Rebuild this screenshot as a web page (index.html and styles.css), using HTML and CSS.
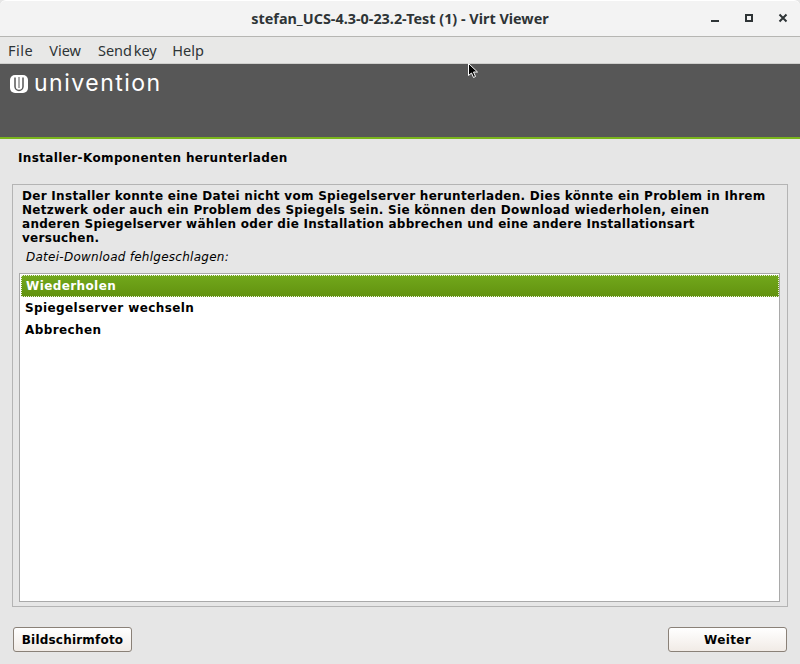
FILE: index.html
```html
<!DOCTYPE html>
<html lang="de">
<head>
<meta charset="utf-8">
<title>stefan_UCS-4.3-0-23.2-Test (1) - Virt Viewer</title>
<link rel="stylesheet" href="styles.css">
</head>
<body>
<div class="window">
  <header class="titlebar">
    <div class="title">stefan_UCS-4.3-0-23.2-Test (1) - Virt Viewer</div>
    <div class="controls">
      <svg class="ctl" width="16" height="16" viewBox="0 0 16 16"><rect x="3" y="10" width="8" height="2" fill="#2e3436"/></svg>
      <svg class="ctl" width="16" height="16" viewBox="0 0 16 16"><rect x="4" y="5" width="6" height="6" fill="none" stroke="#2e3436" stroke-width="2"/></svg>
      <svg class="ctl" width="16" height="16" viewBox="0 0 16 16"><path d="M3.500 4.500l7 7M10.500 4.500l-7 7" fill="none" stroke="#2e3436" stroke-width="2"/></svg>
    </div>
  </header>
  <nav class="menubar">
    <span class="menu-item menu-file">File</span>
    <span class="menu-item">View</span>
    <span class="menu-item menu-send">Send key</span>
    <span class="menu-item">Help</span>
  </nav>
  <div class="banner">
    <div class="logo">
      <svg width="19" height="19" viewBox="0 0 19 19"><rect x="0" y="0" width="18" height="18" rx="5" fill="#fff"/><path d="M5 2.500v9a4 4 0 0 0 8 0v-9" fill="none" stroke="#575757" stroke-width="1.500"/><path d="M9 2v11" stroke="#575757" stroke-width="1"/></svg>
      <span class="logo-text">univention</span>
    </div>
    <svg class="cursor" width="12" height="18" viewBox="0 0 12 18"><path d="M1.500 1.500v12l3-2.500 2 4.500 2-1-2-4.500h4z" fill="#000" stroke="#fff" stroke-width="1"/></svg>
  </div>
  <main class="installer">
    <h1 class="heading">Installer-Komponenten herunterladen</h1>
    <section class="frame">
      <p class="message">Der Installer konnte eine Datei nicht vom Spiegelserver herunterladen. Dies könnte ein Problem in Ihrem Netzwerk oder auch ein Problem des Spiegels sein. Sie können den Download wiederholen, einen anderen Spiegelserver wählen oder die Installation abbrechen und eine andere Installationsart versuchen.</p>
      <p class="question">Datei-Download fehlgeschlagen:</p>
      <ul class="list">
        <li class="row selected">Wiederholen</li>
        <li class="row">Spiegelserver wechseln</li>
        <li class="row">Abbrechen</li>
      </ul>
    </section>
    <footer class="actions">
      <button class="btn btn-shot">Bildschirmfoto</button>
      <button class="btn btn-next">Weiter</button>
    </footer>
  </main>
</div>
</body>
</html>
```
FILE: styles.css
```css
* { box-sizing: border-box; }
html, body { margin: 0; padding: 0; }
body { width: 800px; height: 664px; overflow: hidden; background: #e6e6e6; }
.window { width: 800px; height: 664px; display: flex; flex-direction: column; position: relative; }
.titlebar { height: 37px; flex: none; background: #f3f3f3; border-bottom: 1px solid #b6b6b3; border-top: 1px solid #fff; border-radius: 6px 6px 0 0; display: flex; align-items: center; justify-content: center; position: relative; }
.title { font: 700 14.400px "Noto Sans", sans-serif; color: #2e3436; }
.controls { position: absolute; right: 9px; top: 9px; display: flex; gap: 18px; margin-right: -1px; }
.ctl { display: block; }
.menubar { height: 27px; flex: none; background: #e8e8e7; border-bottom: 1px solid #cfcfcd; display: flex; align-items: center; padding-left: 8px; gap: 16px; font: 14.500px "Noto Sans", sans-serif; color: #2e3436; }
.menu-file { letter-spacing: 0.500px; }
.menu-send { word-spacing: -2px; margin-left: 1px; margin-right: -0.500px; }
.banner { height: 75px; flex: none; background: #575757; border-bottom: 2px solid #7ab51d; position: relative; padding: 11px 0 0 10px; }
.logo { display: flex; align-items: center; gap: 5px; height: 19px; }
.logo svg { display: block; }
.logo-text { font: 400 23px "Inter", sans-serif; color: #fff; letter-spacing: 1.500px; margin-bottom: 4px; }
.cursor { position: absolute; left: 467px; top: -2px; }
.installer { flex: 1; display: flex; flex-direction: column; padding: 0 12px; font-family: "DejaVu Sans", sans-serif; font-size: 12px; color: #000; }
.heading { margin: 12px 0 0 6px; font-size: 12px; line-height: 14px; font-weight: 700; letter-spacing: 0.370px; height: 33px; }
.frame { height: 423px; flex: none; border: 1px solid #b4b4b4; padding: 4px 7px 0 6px; display: flex; flex-direction: column; }
.message { margin: 0 10px 0 3px; font-weight: 700; line-height: 14px; letter-spacing: 0.290px; }
.question { margin: 5px 0 8px 7px; font-style: italic; line-height: 15px; letter-spacing: 0.260px; }
.list { list-style: none; margin: 0; padding: 1px 0 1px 1px; flex: none; height: 329px; background: #fff; border: 1px solid #a9a9a9; }
.row { height: 22px; line-height: 23px; padding-left: 4px; font-weight: 700; letter-spacing: 0.400px; }
.selected { background: linear-gradient(#72a81c, #62920f); color: #fff; outline: 1px dotted #e8f0d8; outline-offset: -1px; padding-left: 5px; }
.actions { display: flex; justify-content: space-between; margin: 20px 1px 0; }
.btn { width: 119px; height: 25px; padding: 0; font: 700 12px "DejaVu Sans", sans-serif; color: #000; background: linear-gradient(#fff, #f1ebe6); border: 1px solid #8a8178; border-radius: 3px; }
.btn-shot { letter-spacing: 0.200px; }
.btn-next { letter-spacing: 0.330px; }
```
